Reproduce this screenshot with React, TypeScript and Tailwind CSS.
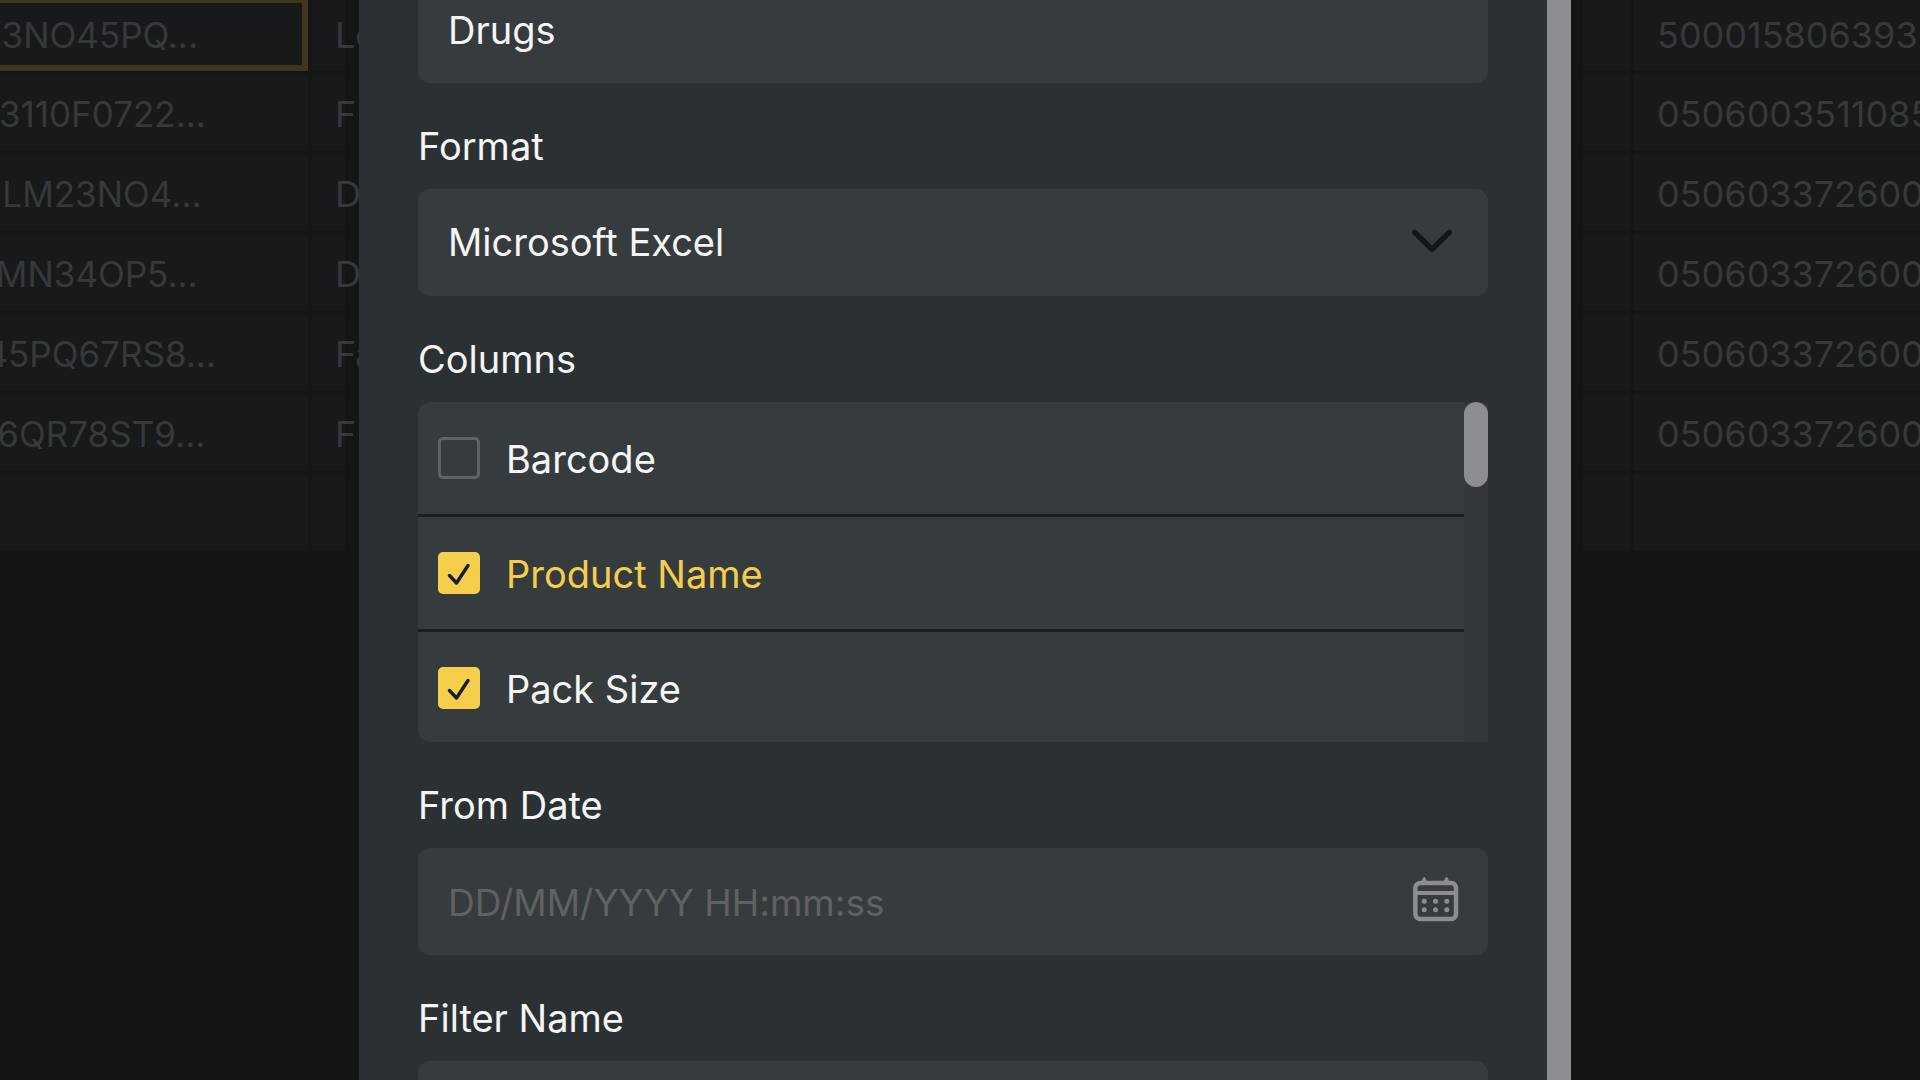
import { useState } from "react";

interface ProductRow {
  code: string;
  name: string;
  barcode: string;
}

interface ColumnOption {
  id: string;
  label: string;
  active?: boolean;
}

const products: ProductRow[] = [
  { code: "C3NO45PQ...", name: "Lo", barcode: "500015806393" },
  { code: "B3110F0722...", name: "F", barcode: "0506003511085" },
  { code: "NLM23NO4...", name: "D", barcode: "050603372600" },
  { code: "LMN34OP5...", name: "D", barcode: "050603372600" },
  { code: "I45PQ67RS8...", name: "Fa", barcode: "050603372600" },
  { code: "56QR78ST9...", name: "F", barcode: "050603372600" },
  { code: "", name: "", barcode: "" },
];

const columnOptions: ColumnOption[] = [
  { id: "barcode", label: "Barcode" },
  { id: "product-name", label: "Product Name", active: true },
  { id: "pack-size", label: "Pack Size" },
];

const labelClass = "block pt-10 pb-5 text-[38px] leading-[46px] text-[#f5f5f5]";
const fieldClass =
  "block h-[107px] w-full rounded-[12px] bg-[#363b3e] px-[30px] text-[38px] text-[#f5f5f5] outline-none placeholder:text-[37px] placeholder:text-[#606161] placeholder:opacity-100";

function ChevronIcon() {
  return (
    <svg className="h-6 w-[42px]" viewBox="0 0 42 24" fill="none" aria-hidden="true">
      <path
        d="M3.8 3.5 21 20.2 38.2 3.5"
        stroke="#141615"
        strokeWidth="5.5"
        strokeLinecap="round"
        strokeLinejoin="round"
      />
    </svg>
  );
}

function CalendarIcon() {
  return (
    <svg className="size-[46px]" viewBox="0 0 46 46" fill="none" aria-hidden="true">
      <rect x="2.4" y="7" width="40.6" height="36" rx="5" stroke="#8c8d91" strokeWidth="4.5" />
      <path d="M3 17h40" stroke="#8c8d91" strokeWidth="4.2" />
      <path d="M8.5 6 11.2 1 14 6ZM30.8 6 33.5 1 36.2 6Z" fill="#8c8d91" stroke="#8c8d91" />
      <g fill="#8c8d91">
        <circle cx="11.2" cy="25.3" r="2.5" />
        <circle cx="22.5" cy="25.3" r="2.5" />
        <circle cx="33.8" cy="25.3" r="2.5" />
        <circle cx="11.2" cy="33.8" r="2.5" />
        <circle cx="22.5" cy="33.8" r="2.5" />
        <circle cx="33.8" cy="33.8" r="2.5" />
      </g>
    </svg>
  );
}

function ProductTable() {
  return (
    <div className="-mt-[7px] -ml-6">
      <table className="w-full table-fixed border-separate border-spacing-x-0 border-spacing-y-1 text-[36px] leading-[48px] whitespace-nowrap text-[#34393c]">
        <colgroup>
          <col className="w-[336px]" />
          <col className="w-[33px]" />
          <col />
          <col className="w-[50px]" />
          <col className="w-[287px]" />
        </colgroup>
        <tbody>
          {products.map((product, index) => (
            <tr key={index} className={index === 0 ? "h-[74px]" : "h-[76px]"}>
              <td
                className={`border-r-4 border-[#141615] bg-[#17191a] px-0 pt-0.5 pb-0 text-[35px] ${
                  index === 0 ? "shadow-[inset_0_0_0_6px_#3f371d]" : ""
                }`}
              >
                {product.code}
              </td>
              <td className="bg-[#17191a] pt-0.5 pr-0 pb-0 pl-[23px]">{product.name}</td>
              <td />
              <td className="border-r-3 border-[#141615] bg-[#17191a]" />
              <td className="bg-[#17191a] pt-0.5 pr-0 pb-0 pl-6">{product.barcode}</td>
            </tr>
          ))}
        </tbody>
      </table>
    </div>
  );
}

interface ColumnItemProps {
  option: ColumnOption;
  checked: boolean;
  onToggle: (id: string) => void;
}

function ColumnItem({ option, checked, onToggle }: Readonly<ColumnItemProps>) {
  return (
    <label
      htmlFor={option.id}
      className={`flex h-[115px] shrink-0 items-center gap-[26px] border-b-3 border-[#1b1e20] pl-5 text-[38px] ${
        option.active ? "text-[#f5ce4b]" : "text-[#f5f5f5]"
      }`}
    >
      <span className="relative flex size-[42px] items-center justify-center">
        <input
          id={option.id}
          type="checkbox"
          checked={checked}
          onChange={() => onToggle(option.id)}
          className="size-[42px] appearance-none rounded-[5px] border-3 border-[#626262] checked:border-[#f5ce4b] checked:bg-[#f5ce4b]"
        />
        {checked && (
          <svg
            className="pointer-events-none absolute inset-0 size-[42px]"
            viewBox="0 0 42 42"
            fill="none"
            aria-hidden="true"
          >
            <path
              d="M11.5 23.5 18.5 31 30 13.5"
              stroke="#1b1f22"
              strokeWidth="3.4"
              strokeLinecap="round"
              strokeLinejoin="round"
            />
          </svg>
        )}
      </span>
      <span className="pt-0.5">{option.label}</span>
    </label>
  );
}

export default function App() {
  const [name, setName] = useState<string>("Drugs");
  const [format, setFormat] = useState<string>("xlsx");
  const [fromDate, setFromDate] = useState<string>("");
  const [filterName, setFilterName] = useState<string>("");
  const [selected, setSelected] = useState<string[]>(["product-name", "pack-size"]);

  const toggleColumn = (id: string) => {
    setSelected((current) =>
      current.includes(id) ? current.filter((item) => item !== id) : [...current, id]
    );
  };

  return (
    <div className="relative h-screen overflow-hidden bg-[#141615] font-['Inter',sans-serif]">
      <ProductTable />

      {/* Export dialog */}
      <div className="absolute inset-0 flex pr-[349px] pl-[359px]">
        <div
          role="dialog"
          aria-label="Export"
          className="flex min-w-0 flex-1 overflow-hidden bg-[#2b3032]"
        >
          <form className="-mt-6 min-w-0 flex-1 px-[59px]" onSubmit={(e) => e.preventDefault()}>
            <input
              aria-label="Name"
              className={fieldClass}
              value={name}
              onChange={(e) => setName(e.target.value)}
            />

            <label htmlFor="format" className={labelClass}>
              Format
            </label>
            <div className="relative">
              <select
                id="format"
                className={`${fieldClass} appearance-none`}
                value={format}
                onChange={(e) => setFormat(e.target.value)}
              >
                <option value="xlsx">Microsoft Excel</option>
              </select>
              <span className="pointer-events-none absolute inset-y-0 right-[35px] flex items-center pb-1">
                <ChevronIcon />
              </span>
            </div>

            {/* Columns */}
            <h3 className={labelClass}>Columns</h3>
            <div className="flex h-[340px] overflow-hidden rounded-l-[12px]">
              <div className="flex flex-1 flex-col bg-[#363b3e]">
                {columnOptions.map((option) => (
                  <ColumnItem
                    key={option.id}
                    option={option}
                    checked={selected.includes(option.id)}
                    onToggle={toggleColumn}
                  />
                ))}
              </div>
              <div className="w-6 bg-[#35383a]">
                <div className="h-[85px] rounded-full bg-[#8c8d91]" />
              </div>
            </div>

            <label htmlFor="from-date" className={labelClass}>
              From Date
            </label>
            <div className="relative">
              <input
                id="from-date"
                className={fieldClass}
                placeholder="DD/MM/YYYY HH:mm:ss"
                value={fromDate}
                onChange={(e) => setFromDate(e.target.value)}
              />
              <button
                type="button"
                aria-label="Open calendar"
                className="absolute inset-y-0 right-[29px] flex items-center pb-1.5"
              >
                <CalendarIcon />
              </button>
            </div>

            <label htmlFor="filter-name" className={labelClass}>
              Filter Name
            </label>
            <input
              id="filter-name"
              className={fieldClass}
              value={filterName}
              onChange={(e) => setFilterName(e.target.value)}
            />
          </form>
          <div className="w-6 bg-[#8c8d91]" />
        </div>
      </div>
    </div>
  );
}
